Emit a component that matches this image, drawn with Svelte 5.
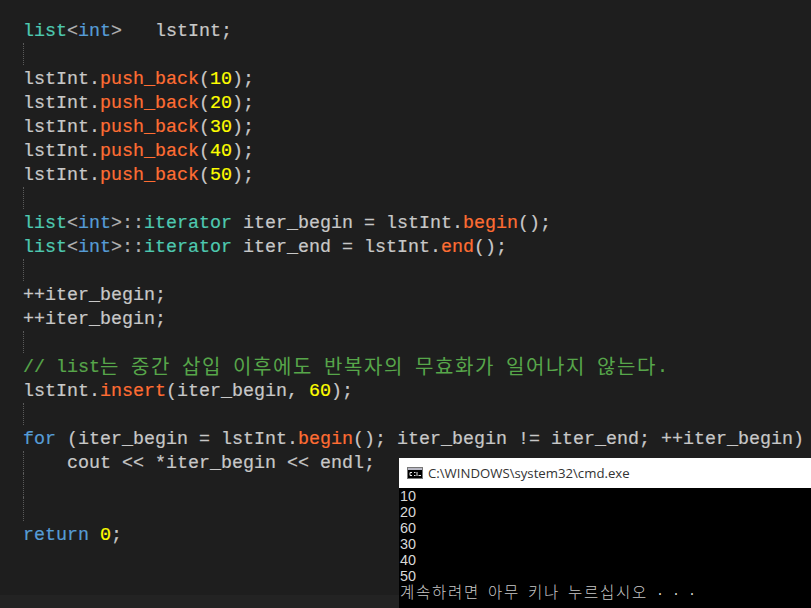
<script lang="ts">
  // Editor lines as token runs: [class, text]. An empty list is a blank line.
  type Token = [string, string];
  interface Line {
    tokens: Token[];
    guide?: boolean;
  }

  const push = (n: string): Line => ({
    tokens: [['id', 'lstInt.'], ['fn', 'push_back'], ['id', '('], ['num', n], ['id', ');']]
  });
  const blank: Line = { tokens: [], guide: true };

  const lines: Line[] = [
    { tokens: [['ty', 'list'], ['op', '<'], ['kw', 'int'], ['op', '>'], ['id', '   lstInt;']] },
    blank,
    push('10'), push('20'), push('30'), push('40'), push('50'),
    blank,
    { tokens: [['ty', 'list'], ['op', '<'], ['kw', 'int'], ['op', '>::'], ['ty', 'iterator'], ['id', ' iter_begin = lstInt.'], ['fn', 'begin'], ['id', '();']] },
    { tokens: [['ty', 'list'], ['op', '<'], ['kw', 'int'], ['op', '>::'], ['ty', 'iterator'], ['id', ' iter_end = lstInt.'], ['fn', 'end'], ['id', '();']] },
    blank,
    { tokens: [['id', '++iter_begin;']] },
    { tokens: [['id', '++iter_begin;']] },
    blank,
    { tokens: [['cm', '// list'], ['cm ko', '는'], ['cm', ' '], ['cm ko', '중간'], ['cm', ' '], ['cm ko', '삽입'], ['cm', ' '], ['cm ko', '이후에도'], ['cm', ' '], ['cm ko', '반복자의'], ['cm', ' '], ['cm ko', '무효화가'], ['cm', ' '], ['cm ko', '일어나지'], ['cm', ' '], ['cm ko', '않는다'], ['cm', '.']] },
    { tokens: [['id', 'lstInt.'], ['fn', 'insert'], ['id', '(iter_begin, '], ['num', '60'], ['id', ');']] },
    blank,
    { tokens: [['kw', 'for'], ['id', ' (iter_begin = lstInt.'], ['fn', 'begin'], ['id', '(); iter_begin != iter_end; ++iter_begin)']] },
    { tokens: [['id', '    cout << *iter_begin << endl;']], guide: true },
    blank,
    blank,
    { tokens: [['kw', 'return'], ['id', ' '], ['num', '0'], ['id', ';']] }
  ];

  const output = ['10', '20', '60', '30', '40', '50'];
</script>

<div class="screen">
  <main class="editor">
    {#each lines as line}
      <div class="line" class:guide={line.guide}>
        {#each line.tokens as [cls, text]}<span class={cls}>{text}</span>{/each}
      </div>
    {/each}
  </main>
  <div class="statusbar"></div>

  <section class="console">
    <header class="titlebar">
      <svg class="cmd-icon" width="16" height="12" viewBox="0 0 16 12" aria-hidden="true">
        <rect x="0.5" y="0.5" width="15" height="11" fill="#000" stroke="#777" />
        <rect x="1" y="1" width="14" height="2" fill="#b8b8c4" />
        <path d="M3 5.5H5M3 5.5V8.5H5M7 5.5H8.5M7 8.5H8.5M10 5V9M11.5 8.5H14" stroke="#e8e8e8" stroke-width="1" fill="none" />
      </svg>
      <span>C:\WINDOWS\system32\cmd.exe</span>
    </header>
    <pre class="terminal">{#each output as row}<div class="digits">{row}</div>{/each}<div><span class="ko-term">계속하려면</span> <span class="ko-term">아무</span> <span class="ko-term">키나</span> <span class="ko-term">누르십시오</span> . . .</div></pre>
  </section>
</div>

<style>
  :global(body) {
    margin: 0;
    background: #1e1e1e;
  }
  .screen {
    position: relative;
    display: flex;
    flex-direction: column;
    width: 811px;
    height: 608px;
    overflow: hidden;
    background: #1e1e1e;
  }
  .editor {
    flex: 1;
    padding: 20px 0 0 23px;
    font-family: "Liberation Mono", monospace;
    font-size: 18.33px;
    color: #c8c8c8;
    -webkit-text-stroke: 0.2px;
  }
  .line {
    position: relative;
    height: 24px;
    line-height: 24px;
    white-space: pre;
  }
  .line.guide::before {
    content: "";
    position: absolute;
    left: 0;
    top: -1px;
    bottom: 3px;
    border-left: 1px dotted #5a5a5a;
  }
  .line.guide + .line.guide::before {
    top: -3px;
  }
  .statusbar {
    height: 13px;
    background: #232323;
  }
  .id { color: #c8c8c8; }
  .op { color: #b4b4b4; }
  .ty { color: #4ec9b0; }
  .kw { color: #569cd6; }
  .fn { color: #ff6d33; }
  .num { color: #ffff00; }
  .cm { color: #57a64a; }
  .ko {
    font-family: "Noto Sans CJK KR", sans-serif;
    font-size: 20px;
    line-height: 0;
    letter-spacing: 1.6px;
    vertical-align: -2px;
    -webkit-text-stroke: 0;
  }
  .console {
    position: absolute;
    left: 399px;
    top: 458px;
    right: 0;
    bottom: 0;
    display: flex;
    flex-direction: column;
    background: #000;
  }
  .titlebar {
    display: flex;
    align-items: center;
    gap: 5px;
    box-sizing: border-box;
    height: 30px;
    padding: 0 0 1px 8px;
    background: #fff;
    color: #333;
    font-family: "Open Sans", sans-serif;
    font-size: 13.2px;
  }
  .terminal {
    margin: 0;
    padding: 0 0 0 1px;
    font-family: "Liberation Mono", monospace;
    font-size: 13.33px;
    line-height: 16px;
    color: #d8d8d8;
  }
  .terminal div {
    height: 16px;
  }
  .terminal .digits {
    font-family: "Liberation Sans", sans-serif;
    font-size: 14.4px;
  }
  .ko-term {
    font-family: "Noto Sans CJK KR", sans-serif;
    font-size: 15.5px;
    font-weight: 300;
    line-height: 0;
    letter-spacing: 1.74px;
    vertical-align: -3px;
    color: #c8c8c8;
  }
</style>
